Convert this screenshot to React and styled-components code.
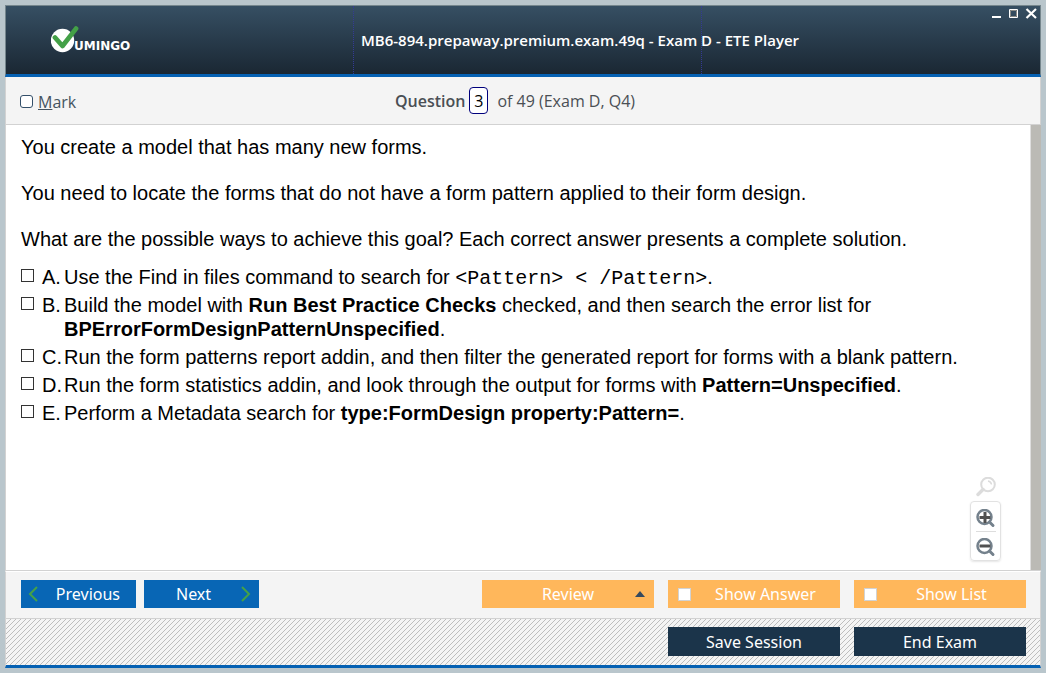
import React, { useState } from "react";
import styled, { createGlobalStyle } from "styled-components";

const GlobalStyle = createGlobalStyle`
  *, *::before, *::after { box-sizing: border-box; }
  body { margin: 0; background: #b9c6cc; }
  p { margin: 0; }
`;

const ui = `"Open Sans", "Noto Sans", sans-serif`;
const buttonFont = `"Noto Sans", "Open Sans", sans-serif`;

const Page = styled.div`
  min-height: 100vh;
  padding: 5px;
  display: flex;
  flex-direction: column;
  font-family: ${ui};
`;

const Header = styled.header`
  display: flex;
  height: 72px;
  border: 1px solid #75868d;
  border-bottom: 3px solid #0561b3;
  background: linear-gradient(#364f63, #1a2733);
  color: #fff;
`;

const Brand = styled.div`
  flex: 0 0 348px;
  display: flex;
  align-items: flex-start;
  padding: 20px 0 0 45px;
  border-right: 1px dotted #343a95;
`;

const BrandName = styled.span`
  margin: 13px 0 0 -6px;
  font: bold 12px/14px "DejaVu Sans", sans-serif;
`;

const TitleCell = styled.div`
  flex: 0 0 348px;
  min-width: 0;
  padding: 22px 0 0 7px;
  border-right: 1px dotted #343a95;
`;

const Title = styled.h1`
  margin: 0;
  font-size: 15px;
  line-height: 24px;
  font-weight: 600;
  white-space: nowrap;
`;

const WindowControls = styled.div`
  display: flex;
  gap: 5px;
  margin-left: auto;
  padding: 1px 2px 0 0;
  align-self: flex-start;
`;

const WindowButton = styled.button`
  display: block;
  width: 13px;
  height: 13px;
  padding: 0;
  border: 0;
  background: none;
`;

const QuestionBar = styled.div`
  display: grid;
  grid-template-columns: 1fr auto 1fr;
  align-items: center;
  height: 48px;
  padding: 0 14px;
  border: 1px solid #d2d2d2;
  border-top: 0;
  background: #f4f4f4;
  color: #4a4f54;
  font-size: 16px;
`;

const MarkLabel = styled.label`
  display: flex;
  align-items: center;
  gap: 5px;
  padding-top: 2px;
  color: #45535f;
`;

const CheckBox = styled.input`
  appearance: none;
  flex: none;
  width: 13px;
  height: 13px;
  margin: 0;
  border: 1px solid ${(p) => p.$line || "#333"};
  border-radius: ${(p) => p.$radius || 0}px;
  background: #fff;
  &:checked { background: #34506a; }
`;

const Position = styled.div`
  display: flex;
  align-items: center;
  margin-right: 16px;
  white-space: nowrap;
`;

const Strong = styled.label`
  font-weight: 600;
`;

const NumberBox = styled.input`
  width: 19px;
  height: 27px;
  margin: 0 9px 0 4px;
  padding: 0;
  border: 1px solid #00007c;
  border-radius: 4px;
  background: #fff;
  color: #000;
  font: 16px/24px ${ui};
  text-align: center;
`;

const Body = styled.div`
  flex: 1;
  display: flex;
  border-bottom: 1px solid #d2d2d2;
  background: #fff;
`;

const Content = styled.main`
  flex: 1;
  padding: 11px 14px 10px 15px;
  border-left: 1px solid #d2d2d2;
  border-right: 1px solid #dedede;
  color: #000;
  font: 20px/23px "Liberation Sans", Arial, sans-serif;
  position: relative;
`;

const Paragraph = styled.p`
  margin-bottom: 23px;
`;

const Options = styled.fieldset`
  display: flex;
  flex-direction: column;
  gap: 4px;
  margin: -9px 0 0;
  padding: 0;
  border: 0;
`;

const Option = styled.label`
  display: grid;
  grid-template-columns: 21px 22px 1fr;
  line-height: 24px;
  & > input { margin-top: 4px; }
`;

const Code = styled.code`
  font: 20px/20px "Liberation Mono", "Courier New", monospace;
`;

const Scroll = styled.div`
  flex: 0 0 10px;
  background: #bbbab5;
`;

const ZoomTools = styled.div`
  position: absolute;
  right: 29px;
  bottom: 9px;
  display: flex;
  flex-direction: column;
  align-items: center;
  gap: 4px;
`;

const ZoomGroup = styled.div`
  display: flex;
  flex-direction: column;
  align-items: center;
  width: 31px;
  height: 60px;
  border: 1px solid #e2e2e2;
  border-radius: 4px;
  box-shadow: 0 1px 2px rgba(0, 0, 0, 0.1);
`;

const ZoomButton = styled.button`
  display: block;
  width: 20px;
  height: 29px;
  padding: 4px 0 0;
  border: 0;
  background: none;
  & + & { border-top: 1px solid #ddd; }
  svg { display: block; }
`;

const ActionBar = styled.div`
  display: flex;
  align-items: flex-start;
  gap: 14px;
  height: 48px;
  padding: 8px 14px 0 15px;
  border: 1px solid #d2d2d2;
  border-top: 1px solid #fff;
  background: #f4f4f4;
`;

const NavGroup = styled.div`
  display: flex;
  gap: 8px;
  margin-right: auto;
`;

const button = `
  height: 28px;
  padding: 0;
  border: 0;
  color: #fff;
  font: 16px/28px ${buttonFont};
  white-space: nowrap;
`;

const NavButton = styled.button`
  ${button}
  display: flex;
  align-items: center;
  justify-content: space-between;
  width: 115px;
  padding: ${(p) => (p.$next ? "0 8px 0 32px" : "0 16px 0 7px")};
  background: #0866b5;
`;

const ReviewButton = styled.button`
  ${button}
  display: grid;
  grid-template-columns: 28px 1fr 28px;
  align-items: center;
  justify-items: center;
  width: 172px;
  background: #ffb75b;
`;

const ToggleButton = styled.label`
  ${button}
  display: grid;
  grid-template-columns: 23px 1fr;
  align-items: center;
  width: 172px;
  padding: 0 10px;
  background: #ffb75b;
  text-align: center;
`;

const SessionBar = styled.footer`
  display: flex;
  justify-content: flex-end;
  gap: 14px;
  height: 49px;
  padding: 8px 14px 0 0;
  border: 1px solid #d2d2d2;
  border-top: 0;
  border-bottom: 3px solid #0561b3;
  background: #f4f4f4 linear-gradient(135deg, transparent 42%, #bdbdbd 42% 58%, transparent 58%) 0 0 / 5px 5px;
`;

const SessionButton = styled.button`
  ${button}
  width: 172px;
  height: 29px;
  background: #1b344a;
`;

const Logo = () => (
  <svg width="29" height="28" viewBox="0 0 29 28" aria-hidden="true">
    <circle cx="11.5" cy="14.5" r="11.7" fill="#fff" />
    <path d="M4 11.5 L11.5 20 L25 2.6" fill="none" stroke="#43a047" strokeWidth="4.8" strokeLinecap="round" strokeLinejoin="round" />
  </svg>
);

const Chevron = ({ d }) => (
  <svg width="10" height="16" viewBox="0 0 10 16" aria-hidden="true">
    <path d={d} fill="none" stroke="#45a148" strokeWidth="2" />
  </svg>
);

const Lens = ({ sign }) => (
  <svg width="20" height="20" viewBox="0 0 20 20" aria-hidden="true">
    <circle cx="8.5" cy="8" r="7" fill="none" stroke="#74818c" strokeWidth="2.5" />
    <path d="M13.5 13 L17 16.5" stroke="#74818c" strokeWidth="3" strokeLinecap="round" />
    <path d={sign} stroke="#505050" strokeWidth="3" />
  </svg>
);

const OPTIONS = [
  ["A.", <>Use the Find in files command to search for <Code>&lt;Pattern&gt; &lt; /Pattern&gt;</Code>.</>],
  ["B.", <>Build the model with <b>Run Best Practice Checks</b> checked, and then search the error list for <b>BPErrorFormDesignPatternUnspecified</b>.</>],
  ["C.", <>Run the form patterns report addin, and then filter the generated report for forms with a blank pattern.</>],
  ["D.", <>Run the form statistics addin, and look through the output for forms with <b>Pattern=Unspecified</b>.</>],
  ["E.", <>Perform a Metadata search for <b>type:FormDesign property:Pattern=</b>.</>],
];

export default function App() {
  const [number, setNumber] = useState("3");
  return (
    <Page>
      <GlobalStyle />
      <Header>
        <Brand>
          <Logo />
          <BrandName>UMINGO</BrandName>
        </Brand>
        <TitleCell>
          <Title>MB6-894.prepaway.premium.exam.49q - Exam D - ETE Player</Title>
        </TitleCell>
        <WindowControls>
          <WindowButton aria-label="Minimize">
            <svg width="13" height="13"><path d="M3 10h9" stroke="#fff" strokeWidth="2" /></svg>
          </WindowButton>
          <WindowButton aria-label="Maximize">
            <svg width="13" height="13"><path d="M2.5 2.5h8v8h-8z" fill="none" stroke="#fff" /><path d="M3.5 3.5h6v6h-6z" fill="none" stroke="#8b8b86" /></svg>
          </WindowButton>
          <WindowButton aria-label="Close">
            <svg width="13" height="13"><path d="M1.5 2L11 11M11 2L1.5 11" stroke="#fff" strokeWidth="2.2" /></svg>
          </WindowButton>
        </WindowControls>
      </Header>
      <QuestionBar>
        <MarkLabel>
          <CheckBox type="checkbox" $line="#34506a" $radius={3} />
          <span><u>M</u>ark</span>
        </MarkLabel>
        <Position>
          <Strong htmlFor="question-number">Question</Strong>
          <NumberBox id="question-number" value={number} onChange={(e) => setNumber(e.target.value)} />
          <span>of 49 (Exam D, Q4)</span>
        </Position>
      </QuestionBar>
      <Body>
        <Content>
          <Paragraph>You create a model that has many new forms.</Paragraph>
          <Paragraph>You need to locate the forms that do not have a form pattern applied to their form design.</Paragraph>
          <Paragraph>What are the possible ways to achieve this goal? Each correct answer presents a complete solution.</Paragraph>
          <Options>
            {OPTIONS.map(([letter, text]) => (
              <Option key={letter}>
                <CheckBox type="checkbox" />
                <span>{letter}</span>
                <span>{text}</span>
              </Option>
            ))}
          </Options>
          <ZoomTools>
            <svg width="20" height="20" viewBox="0 0 20 20" aria-hidden="true">
              <circle cx="12" cy="7.5" r="6.8" fill="none" stroke="#dcdcdc" strokeWidth="2" />
              <path d="M7 12.5 L2 17.5" stroke="#dcdcdc" strokeWidth="3.4" strokeLinecap="round" />
              <path d="M12 4 Q15 4.5 15.5 7.5" fill="none" stroke="#dcdcdc" strokeWidth="1.5" />
            </svg>
            <ZoomGroup>
              <ZoomButton aria-label="Zoom in"><Lens sign="M3.5 8.5h11M9 3v11" /></ZoomButton>
              <ZoomButton aria-label="Zoom out"><Lens sign="M3.5 8h11" /></ZoomButton>
            </ZoomGroup>
          </ZoomTools>
        </Content>
        <Scroll />
      </Body>
      <ActionBar>
        <NavGroup>
          <NavButton><Chevron d="M9 1L2 8L9 15" />Previous</NavButton>
          <NavButton $next>Next<Chevron d="M1 1L8 8L1 15" /></NavButton>
        </NavGroup>
        <ReviewButton>
          <span />
          Review
          <svg width="10" height="6" aria-hidden="true"><path d="M0 6L5 0L10 6Z" fill="#34495e" /></svg>
        </ReviewButton>
        <ToggleButton><CheckBox type="checkbox" $line="#d2d2d2" />Show Answer</ToggleButton>
        <ToggleButton><CheckBox type="checkbox" $line="#d2d2d2" />Show List</ToggleButton>
      </ActionBar>
      <SessionBar>
        <SessionButton>Save Session</SessionButton>
        <SessionButton>End Exam</SessionButton>
      </SessionBar>
    </Page>
  );
}
